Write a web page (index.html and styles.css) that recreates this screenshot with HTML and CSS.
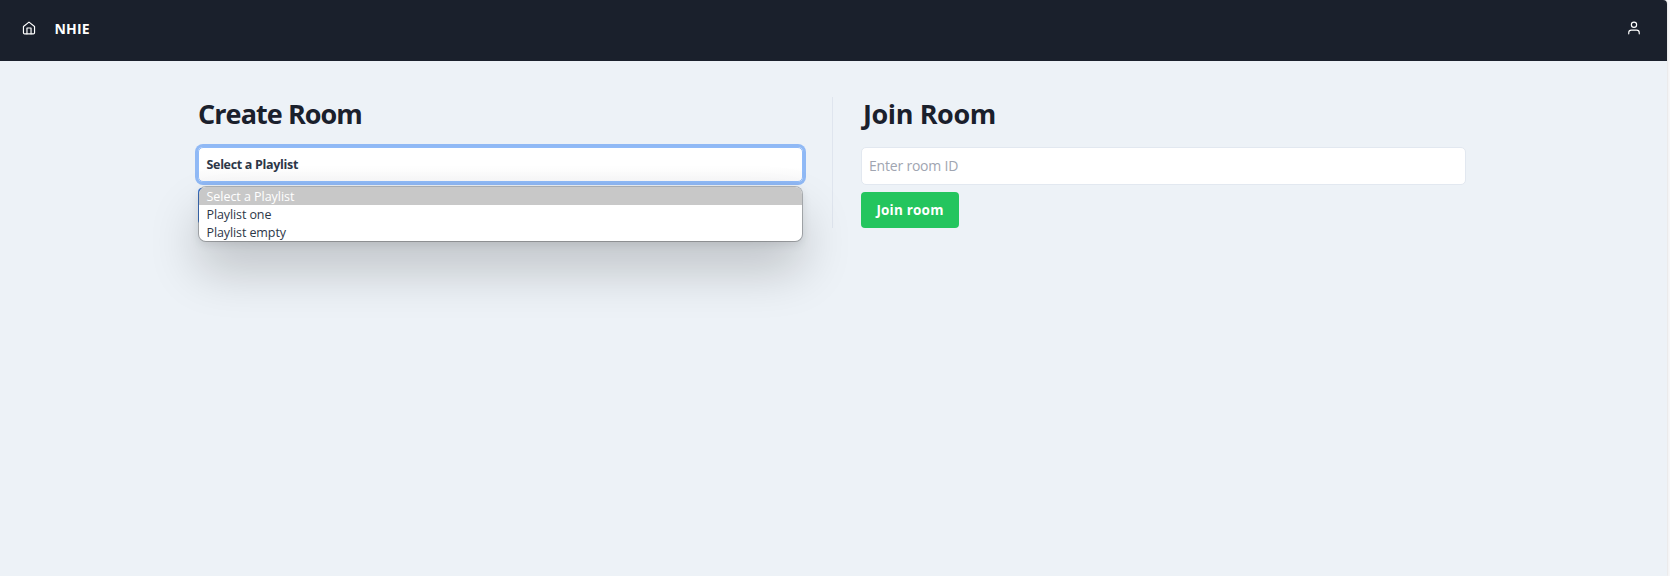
FILE: index.html
```html
<!DOCTYPE html>
<html lang="en">
<head>
<meta charset="utf-8">
<title>NHIE</title>
<link rel="stylesheet" href="styles.css">
</head>
<body>
<div class="app">
  <header class="navbar">
    <a class="home"><svg width="14" height="14" viewBox="0 0 24 24"><path d="M2.5 9.5 12 2l9.500 7.500V20a2 2 0 0 1-2 2h-15a2 2 0 0 1-2-2z"/><path d="M8.500 22V12h7v10"/></svg></a>
    <span class="brand">NHIE</span>
    <a class="user"><svg width="14" height="14" viewBox="0 0 24 24"><circle cx="12" cy="6.500" r="4.500"/><path d="M3 22v-2a4.500 4.500 0 0 1 4.500-4.500h9A4.500 4.500 0 0 1 21 20v2"/></svg></a>
  </header>
  <main class="rooms">
    <section class="panel">
      <h1 class="title">Create Room</h1>
      <div class="select">Select a Playlist
        <ul class="menu">
          <li class="option active">Select a Playlist</li>
          <li class="option">Playlist one</li>
          <li class="option">Playlist empty</li>
        </ul>
      </div>
      <div class="create-button"></div>
    </section>
    <div class="divider"></div>
    <section class="panel">
      <h1 class="title title-join">Join Room</h1>
      <div class="input">Enter room ID</div>
      <button class="join-button">Join room</button>
    </section>
  </main>
</div>
</body>
</html>
```
FILE: styles.css
```css
* { box-sizing: border-box; }
body {
  margin: 0;
  background: #f7f7f8;
  font-family: "Open Sans", "Noto Sans", sans-serif;
  color: #1a202c;
}
.app {
  width: 1667px;
  height: 576px;
  background: #edf2f7;
  border-radius: 0 4px 0 0;
  box-shadow: 0 0 2px #c8c8c8;
  overflow: hidden;
}
.navbar {
  display: flex;
  height: 61px;
  padding: 21px 26px 0 22px;
  background: #1a202c;
  color: #fff;
}
.navbar svg {
  display: block;
  fill: none;
  stroke: #fff;
  stroke-width: 2;
  stroke-linecap: round;
  stroke-linejoin: round;
}
.brand {
  margin-left: 18.5px;
  font-size: 14px;
  font-weight: 700;
  line-height: 16px;
  letter-spacing: .2px;
}
.user { margin-left: auto; }
.rooms {
  display: grid;
  grid-template-columns: 634px 29px 605px;
  height: 167px;
  padding: 36px 0 0 198px;
}
.panel { width: 605px; }
.divider { width: 1px; height: 131px; background: #dfe5ee; }
.title {
  margin: 0;
  height: 50px;
  font-size: 27px;
  font-weight: 700;
  line-height: 34px;
  letter-spacing: -.93px;
  white-space: nowrap;
}
.title-join { padding-left: 2px; letter-spacing: -.4px; }
.select {
  position: relative;
  height: 35px;
  padding: 0 7.5px;
  border: 1px solid #90bbf9;
  border-radius: 5px;
  background: linear-gradient(#fff 60%, #f8f8f9);
  box-shadow: 0 0 0 3px #90b9f5;
  color: #2d3748;
  font-size: 12.5px;
  font-weight: 700;
  line-height: 33px;
  letter-spacing: -.32px;
}
.menu {
  position: absolute;
  top: 38px;
  left: -1px;
  width: 605px;
  height: 56px;
  margin: 0;
  padding: 0;
  border: 1px solid rgba(0, 0, 0, .25);
  border-radius: 8px;
  background: #fff;
  background-clip: padding-box;
  box-shadow: 0 28px 50px rgba(0, 0, 0, .2), 0 3px 10px rgba(0, 0, 0, .09);
  list-style: none;
  overflow: hidden;
}
.option {
  height: 18px;
  padding-left: 7.5px;
  font-weight: 400;
  line-height: 20px;
  letter-spacing: -.1px;
}
.option.active { background: #c8c8c8; color: #fff; letter-spacing: -.04px; }
.create-button {
  width: 120px;
  height: 36px;
  margin-top: 6px;
  border-radius: 4px;
  background: #4e8ef0;
}
.input {
  height: 38px;
  padding: 0 7px;
  border: 1px solid #e2e8f0;
  border-radius: 5px;
  background: #fff;
  color: #a0a5b1;
  font-size: 14px;
  line-height: 35px;
  letter-spacing: -.2px;
}
.join-button {
  display: block;
  width: 98px;
  height: 36px;
  margin-top: 7px;
  padding: 0;
  border: 0;
  border-radius: 4px;
  background: #24c55e;
  color: #fff;
  font: 700 13.5px/36px "Open Sans", "Noto Sans", sans-serif;
  letter-spacing: .2px;
}
```
